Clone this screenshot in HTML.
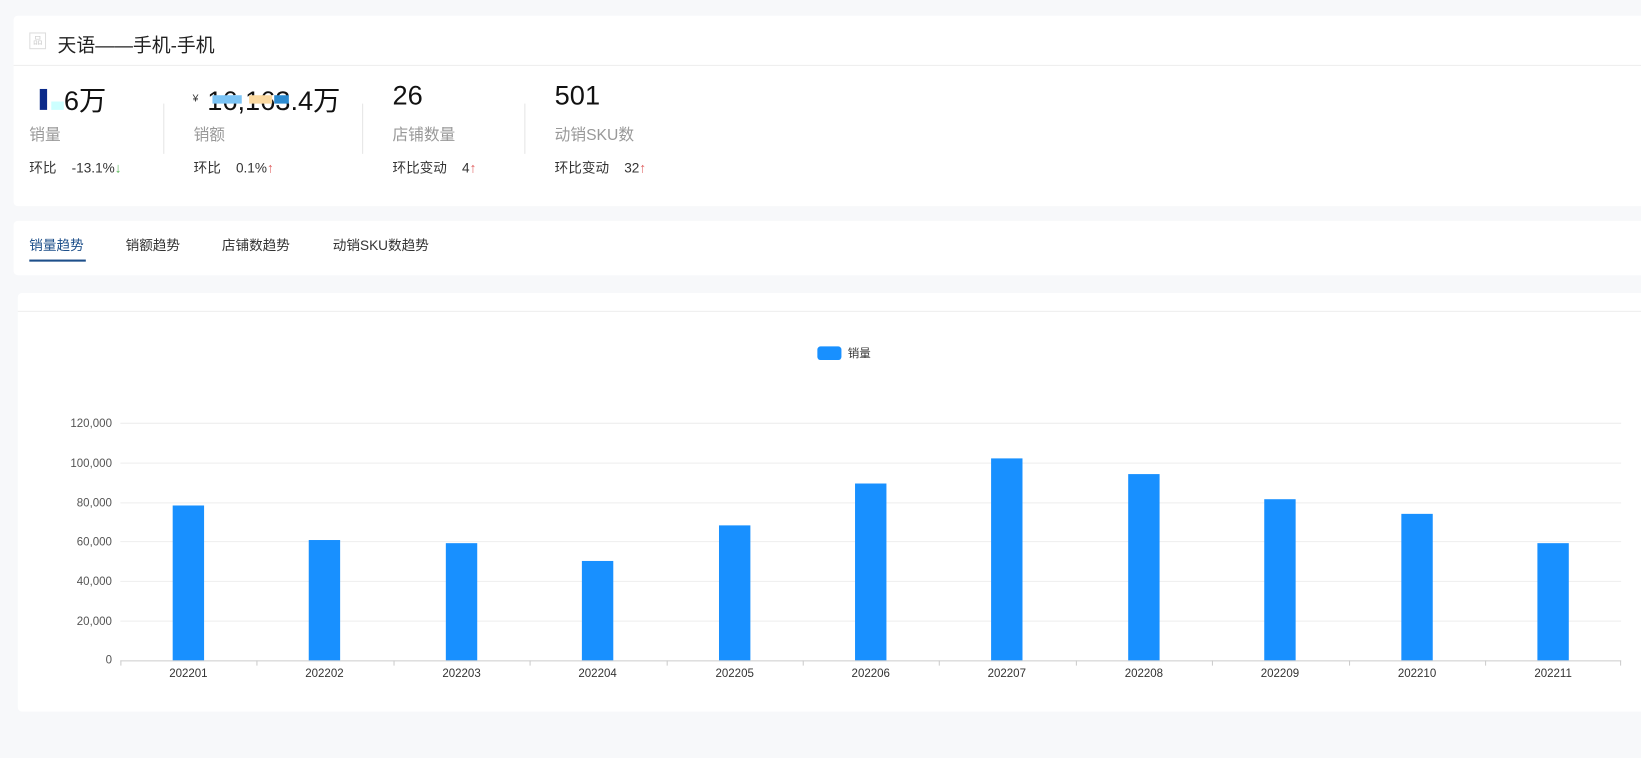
<!DOCTYPE html>
<html><head><meta charset="utf-8"><style>
html,body{margin:0;width:1641px;height:724px;background:#f7f8fa;overflow:hidden}
#w{position:absolute;left:0;top:0;width:1568px;height:692px;transform:scale(1.04656);transform-origin:0 0;font-family:"Liberation Sans","Noto Sans CJK SC",sans-serif;color:#333}
.card{position:absolute;background:#fff;border-radius:4px}
.abs{position:absolute;white-space:nowrap}
.big{font-size:26px;color:#111}
.lab{font-size:15px;color:#999}
.sm{font-size:13px;color:#333}
.vl{position:absolute;width:1px;background:#e5e5e5;top:99px;height:48px}
.up{color:#e06060}.dn{color:#5cb85c}
</style></head><body><div id="w">
<div class="card" style="left:13px;top:15px;width:1640px;height:182px"></div>
<div class="abs" style="left:28px;top:31px;width:16px;height:16px;border:1px solid #ddd;box-sizing:border-box;font-size:9px;color:#ccc;text-align:center;line-height:14px">品</div>
<div class="abs" style="left:55px;top:29px;font-size:18px;color:#222">天语——手机-手机</div>
<div class="abs" style="left:13px;top:62px;width:1628px;height:1px;background:#eee"></div>

<div class="abs big" style="left:28px;top:76px"><span style="display:inline-block;width:6px;height:18px;background:#fff"></span><span style="display:inline-block;width:7px;height:20px;background:#0b2a8a;margin:0 4px"></span><span style="display:inline-block;width:12px;height:8px;background:#cff"></span>6万</div>
<div class="abs lab" style="left:28px;top:118px">销量</div>
<div class="abs sm" style="left:28px;top:150px">环比 &nbsp;&nbsp; -13.1%<span class="dn">↓</span></div>
<div class="vl" style="left:156px"></div>

<div class="abs" style="left:184px;top:89px;font-size:10px">¥</div>
<div class="abs big" style="left:198px;top:76px">16,163.4万</div>
<div class="abs" style="left:203px;top:91px;width:28px;height:8px;background:#7cc4f5"></div>
<div class="abs" style="left:238px;top:91px;width:22px;height:8px;background:#fbd9a0"></div>
<div class="abs" style="left:262px;top:91px;width:14px;height:8px;background:#2b8ad0"></div>
<div class="abs lab" style="left:185px;top:118px">销额</div>
<div class="abs sm" style="left:185px;top:150px">环比 &nbsp;&nbsp; 0.1%<span class="up">↑</span></div>
<div class="vl" style="left:346px"></div>

<div class="abs big" style="left:375px;top:76px">26</div>
<div class="abs lab" style="left:375px;top:118px">店铺数量</div>
<div class="abs sm" style="left:375px;top:150px">环比变动 &nbsp;&nbsp; 4<span class="up">↑</span></div>
<div class="vl" style="left:501px"></div>

<div class="abs big" style="left:530px;top:76px">501</div>
<div class="abs lab" style="left:530px;top:118px">动销SKU数</div>
<div class="abs sm" style="left:530px;top:150px">环比变动 &nbsp;&nbsp; 32<span class="up">↑</span></div>

<div class="card" style="left:13px;top:211px;width:1640px;height:52px"></div>
<div class="abs" style="left:28px;top:224px;font-size:13px;color:#1d4f8a">销量趋势</div>
<div class="abs" style="left:28px;top:248px;width:54px;height:2px;background:#1d4f8a"></div>
<div class="abs" style="left:120px;top:224px;font-size:13px">销额趋势</div>
<div class="abs" style="left:212px;top:224px;font-size:13px">店铺数趋势</div>
<div class="abs" style="left:318px;top:224px;font-size:13px">动销SKU数趋势</div>

<div class="card" style="left:17px;top:280px;width:1640px;height:400px"></div>
<div class="abs" style="left:17px;top:297px;width:1624px;height:1px;background:#eee"></div>

<svg class="abs" style="left:0;top:0" width="1641" height="724" font-family="Liberation Sans, sans-serif" font-size="11" fill="#555">
<rect x="781" y="331" width="23" height="13" rx="3" fill="#1890ff"/>
<text x="810" y="341" font-family="Liberation Sans, Noto Sans CJK SC, sans-serif" fill="#333">销量</text>
<g stroke="#eee" stroke-width="1">
<line x1="115" x2="1549" y1="404.5" y2="404.5"/><line x1="115" x2="1549" y1="442.5" y2="442.5"/><line x1="115" x2="1549" y1="480.5" y2="480.5"/><line x1="115" x2="1549" y1="517.5" y2="517.5"/><line x1="115" x2="1549" y1="555.5" y2="555.5"/><line x1="115" x2="1549" y1="593.5" y2="593.5"/>
</g>
<g text-anchor="end">
<text x="107" y="408">120,000</text><text x="107" y="446">100,000</text><text x="107" y="484">80,000</text><text x="107" y="521">60,000</text><text x="107" y="559">40,000</text><text x="107" y="597">20,000</text><text x="107" y="634">0</text>
</g>
<g fill="#1890ff">
<rect x="165" y="483" width="30" height="148"/><rect x="295" y="516" width="30" height="115"/><rect x="426" y="519" width="30" height="112"/><rect x="556" y="536" width="30" height="95"/><rect x="687" y="502" width="30" height="129"/><rect x="817" y="462" width="30" height="169"/><rect x="947" y="438" width="30" height="193"/><rect x="1078" y="453" width="30" height="178"/><rect x="1208" y="477" width="30" height="154"/><rect x="1339" y="491" width="30" height="140"/><rect x="1469" y="519" width="30" height="112"/>
</g>
<line x1="115" x2="1549" y1="631.5" y2="631.5" stroke="#ccc"/>
<g stroke="#ccc"><line x1="115.5" x2="115.5" y1="631" y2="636"/><line x1="245.5" x2="245.5" y1="631" y2="636"/><line x1="376.5" x2="376.5" y1="631" y2="636"/><line x1="506.5" x2="506.5" y1="631" y2="636"/><line x1="637.5" x2="637.5" y1="631" y2="636"/><line x1="767.5" x2="767.5" y1="631" y2="636"/><line x1="897.5" x2="897.5" y1="631" y2="636"/><line x1="1028.5" x2="1028.5" y1="631" y2="636"/><line x1="1158.5" x2="1158.5" y1="631" y2="636"/><line x1="1289.5" x2="1289.5" y1="631" y2="636"/><line x1="1419.5" x2="1419.5" y1="631" y2="636"/><line x1="1548.5" x2="1548.5" y1="631" y2="636"/></g>
<g text-anchor="middle" fill="#333">
<text x="180" y="647">202201</text><text x="310" y="647">202202</text><text x="441" y="647">202203</text><text x="571" y="647">202204</text><text x="702" y="647">202205</text><text x="832" y="647">202206</text><text x="962" y="647">202207</text><text x="1093" y="647">202208</text><text x="1223" y="647">202209</text><text x="1354" y="647">202210</text><text x="1484" y="647">202211</text>
</g>
</svg>
</div></body></html>
